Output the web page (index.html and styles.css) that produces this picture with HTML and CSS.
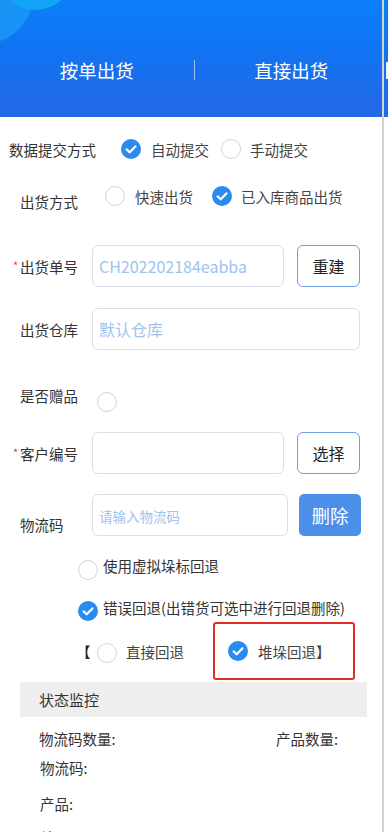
FILE: index.html
```html
<!DOCTYPE html>
<html lang="zh-CN">
<head>
    <meta charset="UTF-8">
    <title>出货</title>
    <link rel="stylesheet" href="styles.css">
</head>
<body>

<div class="page">
    <div class="header">
        <span class="bubble bubble-big"></span>
        <span class="bubble bubble-small"></span>
        <div class="tabs">
            <div class="tab">按单出货</div>
            <div class="tab-sep"></div>
            <div class="tab">直接出货</div>
        </div>
        <span class="next-sep"></span>
    </div>

    <div class="row row-submit">
        <span class="row-title">数据提交方式</span>
        <span class="radio checked first">
            <svg viewBox="0 0 20 20"><circle cx="10" cy="10" r="10"/><path d="M5.6 10.4 L8.7 13.3 L14.4 7.4"/></svg>
        </span>
        <span class="opt-text">自动提交</span>
        <span class="radio second"></span>
        <span class="opt-text">手动提交</span>
    </div>

    <div class="row row-ship">
        <span class="field-label label-low">出货方式</span>
        <span class="radio ship-first"></span>
        <span class="opt-text">快速出货</span>
        <span class="radio checked ship-second">
            <svg viewBox="0 0 20 20"><circle cx="10" cy="10" r="10"/><path d="M5.6 10.4 L8.7 13.3 L14.4 7.4"/></svg>
        </span>
        <span class="opt-text">已入库商品出货</span>
    </div>

    <div class="row row-field row-order">
        <span class="field-label"><span class="req">*</span>出货单号</span>
        <input class="text-input short" type="text" placeholder="CH202202184eabba">
        <button class="btn-outline" type="button">重建</button>
    </div>

    <div class="row row-field row-store">
        <span class="field-label">出货仓库</span>
        <input class="text-input wide" type="text" placeholder="默认仓库">
    </div>

    <div class="row row-gift">
        <span class="field-label label-high">是否赠品</span>
        <span class="radio gift-radio"></span>
    </div>

    <div class="row row-field row-customer">
        <span class="field-label"><span class="req">*</span>客户编号</span>
        <input class="text-input short" type="text">
        <button class="btn-outline" type="button">选择</button>
    </div>

    <div class="row row-field row-code">
        <span class="field-label label-code">物流码</span>
        <input class="text-input code small-ph" type="text" placeholder="请输入物流码">
        <button class="btn-fill" type="button">删除</button>
    </div>

    <div class="row row-check row-virtual">
        <span class="radio"></span>
        <span class="check-text up5">使用虚拟垛标回退</span>
    </div>

    <div class="row row-check row-error">
        <span class="radio checked">
            <svg viewBox="0 0 20 20"><circle cx="10" cy="10" r="10"/><path d="M5.6 10.4 L8.7 13.3 L14.4 7.4"/></svg>
        </span>
        <span class="check-text up4">错误回退(出错货可选中进行回退删除)</span>
    </div>

    <div class="row row-back">
        <span class="bracket">【</span>
        <span class="radio"></span>
        <span class="opt-text direct-text">直接回退</span>
        <div class="highlight">
            <span class="radio checked">
                <svg viewBox="0 0 20 20"><circle cx="10" cy="10" r="10"/><path d="M5.6 10.4 L8.7 13.3 L14.4 7.4"/></svg>
            </span>
            <span class="opt-text">堆垛回退】</span>
        </div>
    </div>

    <div class="monitor-title">状态监控</div>

    <div class="stat-row">
        <span class="stat-left">物流码数量:</span>
        <span>产品数量:</span>
    </div>
    <div class="stat-line line-code">物流码:</div>
    <div class="stat-line line-product">产品:</div>
    <div class="stat-line line-result">结果:</div>

    <div class="edge-line"></div>
</div>

</body>
</html>
```

FILE: styles.css
```css
body {
    margin: 0;
    background-color: #fff;
    color: #333;
    font-family: "Noto Sans CJK SC", "Liberation Sans", sans-serif;
    font-size: 14.5px;
}

.page {
    position: relative;
    width: 388px;
    height: 832px;
    overflow: hidden;
}

/* header */

.header {
    position: relative;
    height: 117px;
    overflow: hidden;
    background: linear-gradient(180deg, #0a80f8 0%, #1273f2 45%, #2468e4 100%);
}

.bubble {
    position: absolute;
    border-radius: 50%;
}

.bubble-big {
    left: -75px;
    top: -65px;
    width: 110px;
    height: 110px;
    background-color: #1a93f6;
}

.bubble-small {
    left: -5px;
    top: -70px;
    width: 80px;
    height: 80px;
    background-color: #12a4f8;
}

.tabs {
    position: relative;
    display: flex;
    align-items: center;
    height: 28px;
    margin-top: 56px;
}

.tab {
    flex: 1;
    text-align: center;
    color: #fff;
    font-size: 18.5px;
}

.tab-sep {
    width: 1px;
    height: 20px;
    background-color: rgba(255, 255, 255, 0.55);
}

.next-sep {
    position: absolute;
    left: 386px;
    top: 62px;
    width: 2px;
    height: 17px;
    background-color: #e8f1ff;
}

.edge-line {
    position: absolute;
    left: 382px;
    top: 0;
    bottom: 0;
    width: 2px;
    background-color: #d2d2d2;
}

/* rows */

.row {
    display: flex;
    align-items: center;
}

.row-title {
    color: #333;
}

.opt-text {
    margin-left: 10px;
    color: #444;
}

.radio {
    flex: none;
    width: 20px;
    height: 20px;
    border: 1px solid #d4d4d4;
    border-radius: 50%;
    box-sizing: border-box;
}

.radio.checked {
    border: none;
}

.radio svg {
    display: block;
    width: 20px;
    height: 20px;
}

.radio svg circle {
    fill: #2a8bef;
}

.radio svg path {
    fill: none;
    stroke: #fff;
    stroke-width: 2.2;
    stroke-linecap: round;
    stroke-linejoin: round;
}

.row-submit {
    height: 30px;
    margin-top: 17px;
    padding-left: 9px;
}

.row-submit .first {
    margin-left: 25px;
}

.row-submit .second {
    margin-left: 12px;
}

.row-submit .second + .opt-text {
    margin-left: 9px;
}

.row-ship {
    height: 30px;
    margin-top: 17px;
    padding-left: 13px;
}

.field-label {
    flex: none;
    width: 79px;
    padding-left: 7px;
    box-sizing: border-box;
    color: #333;
}

.label-low {
    padding-top: 10px;
}

.label-high {
    margin-bottom: 12px;
}

.label-code {
    padding-top: 18px;
}

.req {
    display: inline-block;
    width: 7px;
    margin-left: -7px;
    color: #e8413c;
    font-size: 11px;
    vertical-align: 3px;
}

.ship-first {
    margin-left: 13px;
}

.ship-second {
    margin-left: 19px;
}

.ship-second + .opt-text {
    margin-left: 9px;
}

.row-field {
    height: 42px;
    padding-left: 13px;
}

.row-order {
    margin-top: 34px;
}

.row-store {
    margin-top: 21px;
}

.row-customer {
    margin-top: 16px;
}

.row-code {
    margin-top: 20px;
}

.text-input {
    height: 42px;
    padding: 0 6px;
    border: 1px solid #dcdfe6;
    border-radius: 6px;
    box-sizing: border-box;
    font-family: "Noto Sans CJK SC", "Liberation Sans", sans-serif;
    font-size: 16px;
    color: #333;
    outline: none;
}

.text-input::placeholder {
    color: #9ec3f0;
}

.small-ph::placeholder {
    font-size: 13.5px;
}

.short {
    width: 192px;
}

.wide {
    width: 268px;
}

.code {
    width: 196px;
}

.btn-outline {
    width: 63px;
    height: 42px;
    margin-left: 13px;
    border: 1px solid #6e9edf;
    border-radius: 6px;
    background-color: #fff;
    color: #222;
    font-family: "Noto Sans CJK SC", "Liberation Sans", sans-serif;
    font-size: 16px;
    padding: 0;
}

.btn-fill {
    width: 62px;
    height: 42px;
    margin-left: 11px;
    border: none;
    border-radius: 5px;
    background-color: #4b8fe8;
    color: #fff;
    font-family: "Noto Sans CJK SC", "Liberation Sans", sans-serif;
    font-size: 18.5px;
    padding: 0;
}

.row-gift {
    height: 30px;
    margin-top: 36px;
    padding-left: 13px;
}

.gift-radio {
    margin-left: 5px;
    margin-top: 2px;
}

.row-check {
    height: 20px;
    padding-left: 78px;
}

.row-virtual {
    margin-top: 24px;
}

.row-error {
    margin-top: 21px;
}

.check-text {
    margin-left: 5px;
    color: #333;
    white-space: nowrap;
}

.up5 {
    margin-bottom: 10px;
}

.up4 {
    margin-bottom: 8px;
}

.row-back {
    height: 58px;
    margin-top: 1px;
    padding-left: 76px;
}

.bracket {
    width: 21px;
    color: #222;
}

.row-back > .radio {
    margin-top: 3px;
}

.direct-text {
    margin-left: 9px;
}

.highlight {
    display: flex;
    align-items: center;
    width: 142px;
    height: 58px;
    margin-left: 29px;
    padding-left: 13px;
    border: 2px solid #e32b28;
    border-radius: 3px;
    box-sizing: border-box;
}

/* monitor */

.monitor-title {
    height: 35px;
    margin: 2px 21px 0 20px;
    padding-left: 19px;
    line-height: 35px;
    background-color: #eeeeee;
    font-size: 15px;
    color: #333;
}

.stat-row {
    display: flex;
    height: 20px;
    margin-top: 12px;
    padding-left: 39px;
    line-height: 20px;
    color: #333;
}

.stat-left {
    width: 237px;
}

.stat-line {
    height: 20px;
    padding-left: 40px;
    line-height: 20px;
    color: #333;
}

.line-code {
    margin-top: 9px;
}

.line-product {
    margin-top: 16px;
}

.line-result {
    margin-top: 14px;
}
```
